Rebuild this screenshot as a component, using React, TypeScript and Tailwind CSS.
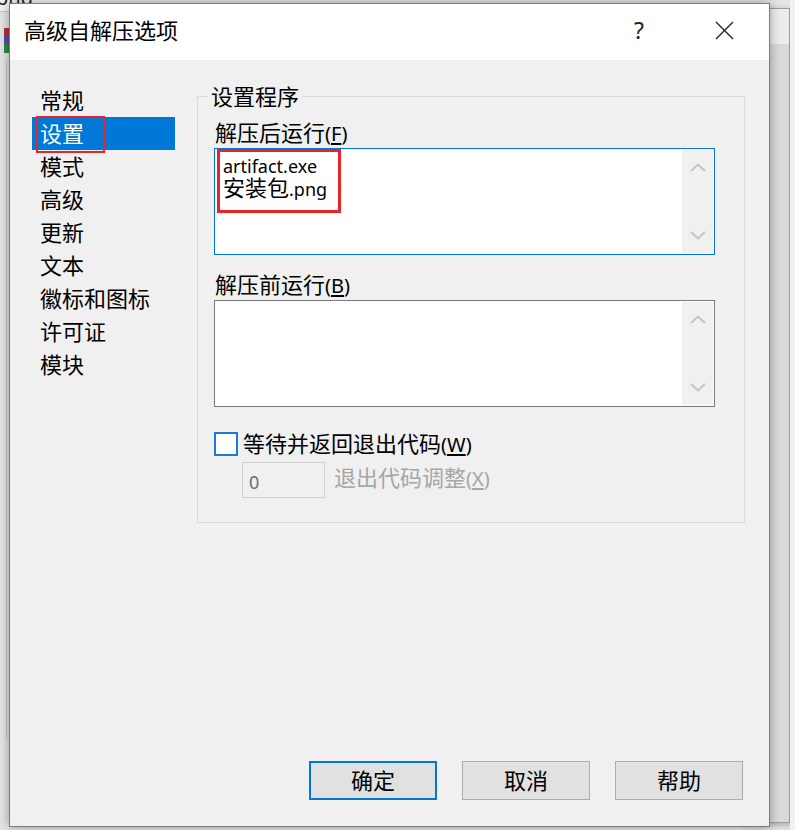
import type { ReactNode } from "react";

const MENU = ["常规", "设置", "模式", "高级", "更新", "文本", "徽标和图标", "许可证", "模块"];

function Key({ k }: { k: string }) {
  return (
    <span className="text-[20px]">
      (<span className="underline underline-offset-2">{k}</span>)
    </span>
  );
}

function Lat({ children }: { children: ReactNode }) {
  return <span className="text-[18px]">{children}</span>;
}

function Chevron({ up }: { up?: boolean }) {
  return (
    <svg width="16" height="9" viewBox="0 0 16 9" fill="none" stroke="#c4c4c4" strokeWidth="2">
      <path d={up ? "M1 8 L8 1.5 L15 8" : "M1 1 L8 7.5 L15 1"} />
    </svg>
  );
}

function MemoBox({ active, children }: { active?: boolean; children?: ReactNode }) {
  return (
    <div
      className={`relative flex w-[501px] h-[107px] bg-white border ${
        active ? "border-[#0078d7]" : "border-[#7a7a7a]"
      }`}
    >
      <div className="flex-1 pl-[8px] pt-[4px] text-black">{children}</div>
      <div className="w-[31px] my-[1px] mr-[1px] bg-[#f0f0f0] flex flex-col items-center justify-between py-[13px]">
        <Chevron up />
        <Chevron />
      </div>
    </div>
  );
}

export default function App() {
  return (
    <div className="relative w-[795px] h-[830px] overflow-hidden bg-[#e4e4e4] font-['Noto_Sans','Noto_Sans_CJK_SC',sans-serif] text-[22px] text-black">
      {/* desktop behind */}
      <div className="absolute left-0 top-0 w-[80px] h-[12px] bg-[#f4f4f4] border-b border-[#c8c8c8] overflow-hidden">
        <span className="absolute left-[-4px] top-[-17px] text-[20px] text-[#222]">png</span>
      </div>
      <div className="absolute left-[4px] top-[28px] w-[6px] flex flex-col">
        <div className="h-[8px] bg-[#b0303a]" />
        <div className="h-[8px] bg-[#5a4aa8]" />
        <div className="h-[9px] bg-[#2f8a3c]" />
      </div>
      <div className="absolute left-[6px] top-[60px] w-[1px] h-[680px] bg-[#c4c4c4]" />
      <div className="absolute left-[740px] top-[8px] w-[50px] h-[815px] bg-[#d9d9d9] border border-[#9c9c9c] shadow-[2px_2px_6px_rgba(0,0,0,0.25)]">
        <div className="h-[35px] bg-[#ececec]" />
      </div>
      <div className="absolute left-[790px] top-0 w-[5px] h-[830px] bg-[#f2f2f2]" />

      {/* dialog */}
      <div className="absolute left-[9px] top-[3px] w-[761px] h-[824px] border border-[#7b7b7b] bg-[#f0f0f0] flex flex-col shadow-[0_0_10px_rgba(0,0,0,0.35)]">
        <div className="h-[56px] bg-white flex items-center pb-[4px]">
          <div className="flex-1 pl-[14px] leading-[30px]">高级自解压选项</div>
          <div className="w-[20px] text-center text-[23px] leading-[30px] text-[#222]">?</div>
          <div className="w-[20px] ml-[65px] mr-[35px] flex justify-center">
            <svg width="19" height="19" viewBox="0 0 19 19" stroke="#222" strokeWidth="1.4">
              <path d="M1 1 L18 18 M18 1 L1 18" />
            </svg>
          </div>
        </div>

        <div className="flex-1 flex flex-col">
          <div className="flex">
            <div className="ml-[22px] mt-[24px] w-[143px] flex flex-col">
              {MENU.map((m) => (
                <div
                  key={m}
                  className={`relative h-[33px] leading-[33px] pl-[8px] ${
                    m === "设置" ? "bg-[#0078d7] text-white" : ""
                  }`}
                >
                  {m}
                  {m === "设置" && (
                    <div className="absolute left-[4px] top-[-1px] w-[69px] h-[37px] border-[2.5px] border-[#e8232a]" />
                  )}
                </div>
              ))}
            </div>

            <div className="relative ml-[22px] mt-[36px] w-[548px] h-[427px] border border-[#dadada] pl-[16px]">
              <div className="absolute left-[10px] top-[-16px] h-[30px] leading-[30px] px-[3px] bg-[#f0f0f0]">
                设置程序
              </div>
              <div className="mt-[20px] h-[31px] leading-[31px] pl-[1px]">
                解压后运行<Key k="F" />
              </div>
              <MemoBox active>
                <div className="h-[23px] leading-[23px]">
                  <Lat>artifact.exe</Lat>
                </div>
                <div className="h-[23px] leading-[23px]">
                  安装包<Lat>.png</Lat>
                </div>
                <div className="absolute left-[2px] top-0 w-[124px] h-[64px] border-[3px] border-[#e8232a]" />
              </MemoBox>
              <div className="mt-[14px] h-[31px] leading-[31px] pl-[1px]">
                解压前运行<Key k="B" />
              </div>
              <MemoBox />
              <div className="mt-[25px] flex items-center h-[24px]">
                <div className="w-[24px] h-[24px] bg-white border-2 border-[#1a7ad4]" />
                <div className="ml-[5px] leading-[24px]">
                  等待并返回退出代码<Key k="W" />
                </div>
              </div>
              <div className="mt-[6px] ml-[28px] flex items-center">
                <div className="w-[83px] h-[36px] border border-[#d0d0d0] bg-[#f0f0f0] pl-[6px] leading-[34px] text-[#6d6d6d]">
                  <Lat>0</Lat>
                </div>
                <div className="ml-[9px] leading-[30px] pb-[4px] text-[#a6a6a6]">
                  退出代码调整<Key k="X" />
                </div>
              </div>
            </div>
          </div>

          <div className="mt-auto mb-[26px] flex justify-end gap-[25px] pr-[26px]">
            <button className="w-[128px] h-[39px] bg-[#e1e1e1] border-2 border-[#0078d7] text-[22px]">确定</button>
            <button className="w-[128px] h-[39px] bg-[#e1e1e1] border border-[#adadad] text-[22px]">取消</button>
            <button className="w-[128px] h-[39px] bg-[#e1e1e1] border border-[#adadad] text-[22px]">帮助</button>
          </div>
        </div>
      </div>
    </div>
  );
}
